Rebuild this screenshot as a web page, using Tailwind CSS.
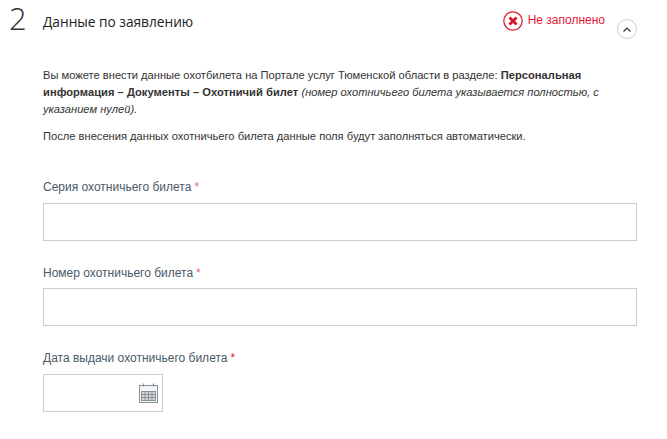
<!DOCTYPE html>
<html lang="ru">
<head>
  <meta charset="UTF-8">
  <meta name="viewport" content="width=device-width, initial-scale=1.0">
  <title>Данные по заявлению</title>
  <script src="https://cdn.jsdelivr.net/npm/@tailwindcss/browser@4"></script>
</head>
<body class="bg-white font-['Liberation_Sans',Arial,sans-serif] text-[12px] text-[#333] overflow-hidden h-[439px]">
  <div class="pl-[9px] pr-[30px]">
    <!-- шапка блока -->
    <div class="flex h-[67px]">
      <div class="w-[34px] font-['Open_Sans',sans-serif] font-light text-[31px] leading-[36px] text-[#333]">2</div>
      <div class="pt-[13px] font-['Open_Sans',sans-serif] text-[13.7px] leading-[18px] text-[#222]">Данные по заявлению</div>
      <div class="ml-auto flex items-start">
        <svg class="mt-[11px] w-[20px] h-[20px]" viewBox="0 0 20 20" fill="none">
          <circle cx="10" cy="10" r="9.2" stroke="#e0202f" stroke-width="1.3"/>
          <path d="M6.5 6.5l7 7M13.5 6.5l-7 7" stroke="#d8152a" stroke-width="2.8"/>
        </svg>
        <div class="ml-[5px] mt-[13px] text-[12px] leading-[15px] text-[#e3173a]">Не заполнено</div>
        <div class="ml-[12px] mt-[19px] w-[20px] h-[20px] rounded-full border border-[#ccc] flex items-center justify-center">
          <svg class="w-[10px] h-[7px]" viewBox="0 0 10 7" fill="none"><path d="M1.5 5.5L5 2l3.5 3.5" stroke="#333" stroke-width="1.2"/></svg>
        </div>
      </div>
    </div>

    <div class="pl-[34px]">
      <p class="leading-[17px] text-[11.15px]">Вы можете внести данные охотбилета на Портале услуг Тюменской области в разделе: <b class="tracking-[0.03px]">Персональная информация – Документы – Охотничий билет</b> <i>(номер охотничьего билета указывается полностью, с указанием нулей).</i></p>
      <p class="mt-[10px] leading-[17px] text-[11.15px]">После внесения данных охотничьего билета данные поля будут заполняться автоматически.</p>

      <label class="block mt-[34px] leading-[17px] text-[#4a5a68]">Серия охотничьего билета<span class="ml-[3px] text-[#e56a7a]">*</span></label>
      <div class="mt-[7px] h-[38px] border border-[#ccc]"></div>

      <label class="block mt-[24px] leading-[17px] text-[#4a5a68]">Номер охотничьего билета<span class="ml-[3px] text-[#e56a7a]">*</span></label>
      <div class="mt-[6px] h-[38px] border border-[#ccc]"></div>

      <label class="block mt-[24px] leading-[17px] text-[#4a5a68]">Дата выдачи охотничьего билета<span class="ml-[3px] text-[#e3173a]">*</span></label>
      <div class="mt-[7px] w-[120px] h-[38px] border border-[#ccc] flex items-center justify-end pr-[4px]">
        <svg class="w-[19px] h-[20px]" viewBox="0 0 19 20" fill="none" stroke="#8a9299">
          <rect x="0.5" y="2.5" width="18" height="17" fill="#f4f5f5"/>
          <path d="M4.5 0.5v3M14.5 0.5v3" stroke-width="1.4"/>
          <rect x="2.5" y="8.5" width="14" height="9" fill="#d5d8da"/>
          <path d="M2.5 11.5h14M2.5 14.5h14M6 8.5v9M9.5 8.5v9M13 8.5v9"/>
        </svg>
      </div>
    </div>
  </div>
</body>
</html>
